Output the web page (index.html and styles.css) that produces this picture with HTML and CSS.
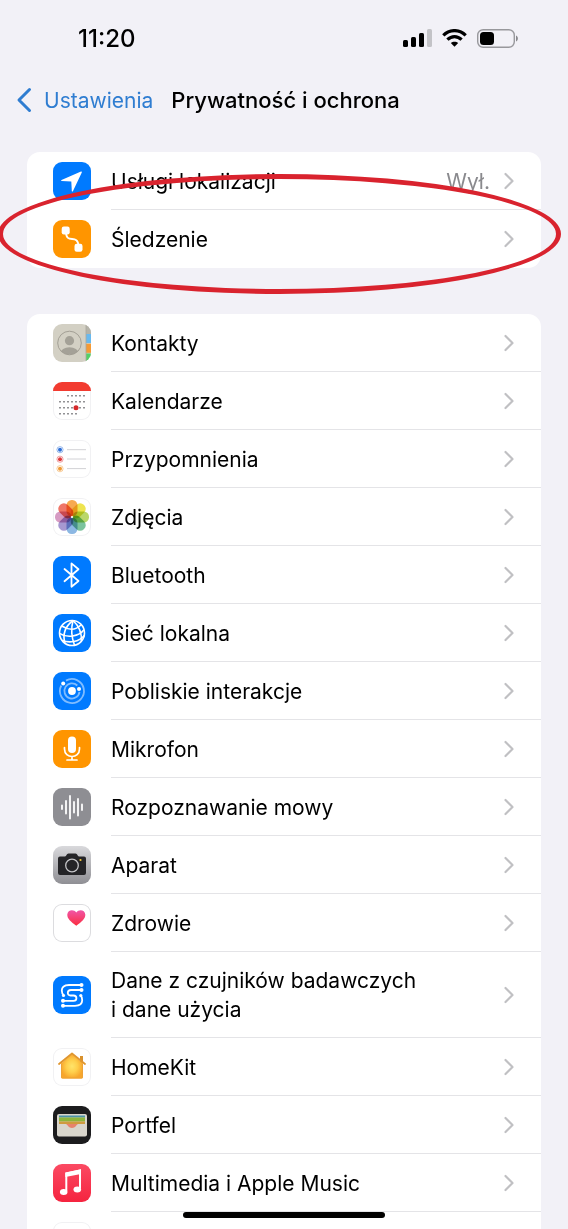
FILE: index.html
```
<!DOCTYPE html>
<html lang="pl">
  <head>
    <meta charset="utf-8">
    <meta name="viewport" content="width=device-width,initial-scale=1.0"/>
    <title>Prywatność i ochrona</title>
    <link rel="stylesheet" href="styles.css">
  </head>

  <body>
    <!-- shared shapes -->
    <svg class="defs" aria-hidden="true">
      <symbol id="chevron" viewBox="0 0 10 18">
        <path d="M1.5 2 L8.5 9 L1.5 16" fill="none" stroke="currentColor" stroke-width="2.2" stroke-linecap="round" stroke-linejoin="round"/>
      </symbol>
      <linearGradient id="camera-bg" x1="0" y1="0" x2="0" y2="1">
        <stop offset="0" stop-color="#d9d9dc"/><stop offset="1" stop-color="#8f8f94"/>
      </linearGradient>
      <linearGradient id="heart-bg" x1="0" y1="0" x2="0" y2="1">
        <stop offset="0" stop-color="#f056a8"/><stop offset="1" stop-color="#fb2d3f"/>
      </linearGradient>
      <linearGradient id="music-bg" x1="0" y1="0" x2="0" y2="1">
        <stop offset="0" stop-color="#fb4a63"/><stop offset="1" stop-color="#f5243f"/>
      </linearGradient>
      <radialGradient id="home-bg">
        <stop offset="0" stop-color="#ffe46a"/><stop offset="0.5" stop-color="#ffcf4c"/><stop offset="1" stop-color="#f7a62c"/>
      </radialGradient>
    </svg>

    <header class="top">
      <div class="status">
        <span class="time">11:20</span>
        <div class="status-icons">
          <svg width="29" height="18" viewBox="0 0 29 18" aria-hidden="true">
            <rect x="0" y="11" width="5" height="7" rx="1.5"/>
            <rect x="8" y="8" width="5" height="10" rx="1.5"/>
            <rect x="16" y="4" width="5" height="14" rx="1.5"/>
            <rect x="24" y="0" width="5" height="18" rx="1.5" fill="#c3c3c7"/>
          </svg>
          <svg width="25" height="18" viewBox="0 0 25 18" aria-hidden="true">
            <g fill="none" stroke="#000" stroke-width="3.2">
              <path d="M1.3 6.3 C7.6 0 17.4 0 23.7 6.3"/>
              <path d="M5.4 10.7 C9.6 6.6 15.4 6.6 19.6 10.7"/>
            </g>
            <path d="M8.8 14.1 C10.9 12.2 14.1 12.2 16.2 14.1 L12.5 17.8 Z"/>
          </svg>
          <svg width="42" height="19" viewBox="0 0 42 19" aria-hidden="true">
            <rect x="0.7" y="0.7" width="36.6" height="17.6" rx="5.5" fill="none" stroke="#98989c" stroke-width="1.4"/>
            <rect x="3" y="3" width="14" height="13" rx="3.5"/>
            <path d="M39 6.5 C41.5 7.5 41.5 11.5 39 12.5 Z" fill="#88888c"/>
          </svg>
        </div>
      </div>
      <nav class="nav">
        <a class="back" href="#">
          <svg width="16" height="26" viewBox="0 0 16 26" aria-hidden="true">
            <path d="M13.5 2.5 L3 13 L13.5 23.5" fill="none" stroke="currentColor" stroke-width="3" stroke-linecap="round" stroke-linejoin="round"/>
          </svg>
          Ustawienia
        </a>
        <h1 class="title">Prywatność i ochrona</h1>
      </nav>
    </header>

    <main class="list">
      <div class="group marked">
        <a class="row" href="#">
          <svg class="icon blue" viewBox="0 0 38 38" aria-hidden="true">
            <path d="M28 9.5 L8.5 18 C8 18.4 8.1 19 8.8 19.1 L18.3 19.6 L18.8 29 C18.9 29.7 19.6 29.8 19.9 29.2 L28.8 10.4 C29 9.7 28.7 9.3 28 9.5 Z" fill="#fff"/>
          </svg>
          <span class="cell"><span class="label">Usługi lokalizacji</span><span class="value">Wył.</span><svg class="chevron" aria-hidden="true"><use href="#chevron"/></svg></span>
        </a>
        <a class="row" href="#">
          <svg class="icon orange" viewBox="0 0 38 38" aria-hidden="true">
            <path d="M13 12 C13 25 25 13 25.5 26" fill="none" stroke="#fff" stroke-width="1.8"/>
            <rect x="8.7" y="6.5" width="8" height="8" rx="2.2" fill="#fff"/>
            <rect x="21.5" y="23.7" width="8" height="8" rx="2.2" fill="#fff"/>
          </svg>
          <span class="cell"><span class="label">Śledzenie</span><svg class="chevron" aria-hidden="true"><use href="#chevron"/></svg></span>
        </a>
        <span class="mark"></span>
      </div>

      <div class="group">
        <!-- Contacts -->
        <a class="row" href="#">
          <svg class="icon contacts" viewBox="0 0 38 38" aria-hidden="true">
            <rect x="33" width="5" height="10" fill="#b5b3a9"/>
            <rect x="33" y="10" width="5" height="9" fill="#69b9ee"/>
            <rect x="33" y="19.8" width="5" height="9" fill="#f59a35"/>
            <rect x="33" y="29.5" width="5" height="9" fill="#54d067"/>
            <path d="M33 0 V38" stroke="#aaa79c" stroke-width="0.8"/>
            <clipPath id="face"><circle cx="16.5" cy="19" r="11.6"/></clipPath>
            <g clip-path="url(#face)" fill="#a4a197"><circle cx="16.5" cy="16.7" r="4.6"/><ellipse cx="16.5" cy="29" rx="9" ry="5.8"/></g>
            <circle cx="16.5" cy="19" r="11.8" fill="none" stroke="#9d9a90" stroke-width="0.9"/>
          </svg>
          <span class="cell"><span class="label">Kontakty</span><svg class="chevron" aria-hidden="true"><use href="#chevron"/></svg></span>
        </a>
        <!-- Calendar -->
        <a class="row" href="#">
          <svg class="icon white" viewBox="0 0 38 38" aria-hidden="true">
            <rect width="38" height="9" fill="#f23b30"/>
            <g stroke="#77777a" stroke-width="1.6" stroke-dasharray="1.6 2.4">
              <path d="M14.2 13.8 H32"/><path d="M6.2 19.8 H32"/><path d="M6.2 25.8 H32"/><path d="M6.2 31.8 H24"/>
            </g>
            <circle cx="23" cy="25.8" r="2.5" fill="#d5292b"/>
          </svg>
          <span class="cell"><span class="label">Kalendarze</span><svg class="chevron" aria-hidden="true"><use href="#chevron"/></svg></span>
        </a>
        <!-- Reminders -->
        <a class="row" href="#">
          <svg class="icon white" viewBox="0 0 38 38" aria-hidden="true">
            <path d="M14 9.7 H33 M14 19 H33 M14 28.6 H33" stroke="#d2d2d6" stroke-width="1"/>
            <g stroke-width="0.8" stroke-opacity="0.6">
              <circle cx="7" cy="9.7" r="2" fill="#2e6fd8"/><circle cx="7" cy="9.7" r="3.1" fill="none" stroke="#2e6fd8"/>
              <circle cx="7" cy="19.2" r="2" fill="#e0383a"/><circle cx="7" cy="19.2" r="3.1" fill="none" stroke="#e0383a"/>
              <circle cx="7" cy="28.7" r="2" fill="#f09a34"/><circle cx="7" cy="28.7" r="3.1" fill="none" stroke="#f09a34"/>
            </g>
          </svg>
          <span class="cell"><span class="label">Przypomnienia</span><svg class="chevron" aria-hidden="true"><use href="#chevron"/></svg></span>
        </a>
        <!-- Photos -->
        <a class="row" href="#">
          <svg class="icon white petals" viewBox="0 0 38 38" aria-hidden="true">
            <rect x="13.5" y="2" width="11" height="16.5" rx="5.2" fill="#f7a13b"/>
            <rect x="13.5" y="2" width="11" height="16.5" rx="5.2" fill="#ece13c" transform="rotate(45 19 19)"/>
            <rect x="13.5" y="2" width="11" height="16.5" rx="5.2" fill="#b3d35a" transform="rotate(90 19 19)"/>
            <rect x="13.5" y="2" width="11" height="16.5" rx="5.2" fill="#6dbd92" transform="rotate(135 19 19)"/>
            <rect x="13.5" y="2" width="11" height="16.5" rx="5.2" fill="#7fb0e0" transform="rotate(180 19 19)"/>
            <rect x="13.5" y="2" width="11" height="16.5" rx="5.2" fill="#9c8dcc" transform="rotate(225 19 19)"/>
            <rect x="13.5" y="2" width="11" height="16.5" rx="5.2" fill="#d290bd" transform="rotate(270 19 19)"/>
            <rect x="13.5" y="2" width="11" height="16.5" rx="5.2" fill="#ee6757" transform="rotate(315 19 19)"/>
            <circle cx="19" cy="19" r="1" fill="#fff"/>
          </svg>
          <span class="cell"><span class="label">Zdjęcia</span><svg class="chevron" aria-hidden="true"><use href="#chevron"/></svg></span>
        </a>
        <!-- Bluetooth -->
        <a class="row" href="#">
          <svg class="icon blue" viewBox="0 0 38 38" aria-hidden="true">
            <path d="M11.5 13 L25.5 25 L18.5 30.8 V7.4 L25.5 13.2 L11.5 25.2" fill="none" stroke="#fff" stroke-width="1.8" stroke-linejoin="round" stroke-linecap="round"/>
          </svg>
          <span class="cell"><span class="label">Bluetooth</span><svg class="chevron" aria-hidden="true"><use href="#chevron"/></svg></span>
        </a>
        <!-- Local network -->
        <a class="row" href="#">
          <svg class="icon blue" viewBox="0 0 38 38" aria-hidden="true">
            <g fill="none" stroke="#fff" stroke-width="1.6">
              <circle cx="19" cy="19" r="12.5"/>
              <path d="M20 6.5 C11.5 13 9.5 21 12 29.5"/>
              <path d="M20 6.5 C18 14 18.5 23 21.5 31.3"/>
              <path d="M20 6.5 C26 12 29 20 28.3 27.4"/>
              <path d="M8.8 12 C16 16.5 23 16 28.2 10.8"/>
              <path d="M6.5 19.3 C14 24.5 26 22.5 31 15.8"/>
              <path d="M9 26.2 C16 29.5 26 28 31.3 21.5"/>
            </g>
          </svg>
          <span class="cell"><span class="label">Sieć lokalna</span><svg class="chevron" aria-hidden="true"><use href="#chevron"/></svg></span>
        </a>
        <!-- Nearby interactions -->
        <a class="row" href="#">
          <svg class="icon blue" viewBox="0 0 38 38" aria-hidden="true">
            <g fill="none" stroke="#7fbcff" stroke-width="1.8">
              <path d="M13 8.6 A12 12 0 1 1 8.3 13.5"/>
              <path d="M24.3 13.5 A7.6 7.6 0 1 0 26.5 19.8"/>
            </g>
            <g fill="#fff"><circle cx="19" cy="19" r="3.9"/><circle cx="10.2" cy="11.4" r="2"/><circle cx="26" cy="17" r="2"/></g>
          </svg>
          <span class="cell"><span class="label">Pobliskie interakcje</span><svg class="chevron" aria-hidden="true"><use href="#chevron"/></svg></span>
        </a>
        <!-- Microphone -->
        <a class="row" href="#">
          <svg class="icon orange" viewBox="0 0 38 38" aria-hidden="true">
            <rect x="15" y="6.5" width="8" height="16.5" rx="4" fill="#fff"/>
            <path d="M11.5 17.5 V19 C11.5 29 26.5 29 26.5 19 V17.5 M19 26.5 V30 M14 30 H24" fill="none" stroke="#fff" stroke-width="1.7" stroke-linecap="round"/>
          </svg>
          <span class="cell"><span class="label">Mikrofon</span><svg class="chevron" aria-hidden="true"><use href="#chevron"/></svg></span>
        </a>
        <!-- Speech -->
        <a class="row" href="#">
          <svg class="icon gray" viewBox="0 0 38 38" aria-hidden="true">
            <path d="M9 17.5 V21 M13 13 V25.5 M17 8 V30.5 M21 14 V24.5 M25 11 V27.5 M29 16.5 V22" stroke="#fff" stroke-width="1.8" stroke-linecap="round"/>
          </svg>
          <span class="cell"><span class="label">Rozpoznawanie mowy</span><svg class="chevron" aria-hidden="true"><use href="#chevron"/></svg></span>
        </a>
        <!-- Camera -->
        <a class="row" href="#">
          <svg class="icon" viewBox="0 0 38 38" aria-hidden="true">
            <rect width="38" height="38" fill="url(#camera-bg)"/>
            <path d="M7 10.5 H12 C13.5 10.5 13.5 7.5 15.5 7.5 H22.5 C24.5 7.5 24.5 10.5 26 10.5 H31 Q33 10.5 33 12.5 V27 Q33 29 31 29 H7 Q5 29 5 27 V12.5 Q5 10.5 7 10.5 Z" fill="#242427"/>
            <circle cx="19" cy="19.5" r="6.3" fill="none" stroke="#c4c4c7" stroke-width="1.3"/>
            <circle cx="27.5" cy="14" r="1.1" fill="#f5c93b"/>
          </svg>
          <span class="cell"><span class="label">Aparat</span><svg class="chevron" aria-hidden="true"><use href="#chevron"/></svg></span>
        </a>
        <!-- Health -->
        <a class="row" href="#">
          <svg class="icon white outlined" viewBox="0 0 38 38" aria-hidden="true">
            <path d="M23.3 21.7 C18 18 14 14.5 14.3 10.5 C14.6 5.5 21 4.8 23.3 8.6 C25.6 4.8 32 5.5 32.3 10.5 C32.6 14.5 28.6 18 23.3 21.7 Z" fill="url(#heart-bg)"/>
          </svg>
          <span class="cell"><span class="label">Zdrowie</span><svg class="chevron" aria-hidden="true"><use href="#chevron"/></svg></span>
        </a>
        <!-- Research sensors -->
        <a class="row" href="#">
          <svg class="icon blue" viewBox="0 0 38 38" aria-hidden="true">
            <g fill="none" stroke="#fff" stroke-width="1.8">
              <path d="M28.5 9 H16 C10.5 9 8.8 11.5 8.8 14.5 C8.8 17.5 9.5 18.5 11 19.5"/>
              <path d="M28.5 14 H18 C13.8 14 13.8 19.5 17.5 19.5 H20.5 C24.4 19.5 24.4 24.8 20.5 24.8 H10"/>
              <path d="M10 29.8 H22 C27.5 29.8 29.2 27.3 29.2 24.3 C29.2 21.5 28.8 20.5 27.5 19.5"/>
            </g>
            <g fill="#fff">
              <circle cx="28.5" cy="9" r="2"/><circle cx="28.5" cy="14" r="2"/><circle cx="27.8" cy="19.5" r="1.6"/>
              <circle cx="10.5" cy="19.5" r="1.6"/><circle cx="10" cy="24.8" r="2"/><circle cx="10" cy="29.8" r="2"/>
            </g>
          </svg>
          <span class="cell"><span class="label">Dane z czujników badawczych i&nbsp;dane użycia</span><svg class="chevron" aria-hidden="true"><use href="#chevron"/></svg></span>
        </a>
        <!-- HomeKit -->
        <a class="row" href="#">
          <svg class="icon white" viewBox="0 0 38 38" aria-hidden="true">
            <path d="M27 8 H30 V15 H27 Z" fill="#d8912d"/>
            <path d="M19 6 L30 15.5 V29 Q30 30.5 28.5 30.5 H9.5 Q8 30.5 8 29 V15.5 Z" fill="url(#home-bg)"/>
            <path d="M6 16 L19 5.5 L32 16" fill="none" stroke="#e0962f" stroke-width="1.8" stroke-linecap="round" stroke-linejoin="round"/>
            <path d="M8.5 16 V29 Q8.5 30 9.5 30 H28.5 Q29.5 30 29.5 29 V16" fill="none" stroke="#eda236"/>
          </svg>
          <span class="cell"><span class="label">HomeKit</span><svg class="chevron" aria-hidden="true"><use href="#chevron"/></svg></span>
        </a>
        <!-- Wallet -->
        <a class="row" href="#">
          <svg class="icon black" viewBox="0 0 38 38" aria-hidden="true">
            <rect x="4" y="8" width="30" height="22.5" rx="2" fill="#d9d6cd"/>
            <rect x="6" y="9.5" width="26" height="2" fill="#4c93a8"/>
            <rect x="6" y="11.5" width="26" height="4" fill="#8db53c"/>
            <rect x="6" y="15.5" width="26" height="2.5" fill="#cf9b3f"/>
            <path d="M13 18 H25 C23 19 22.5 22 19 22 C15.5 22 15 19 13 18 Z" fill="#e8836d"/>
          </svg>
          <span class="cell"><span class="label">Portfel</span><svg class="chevron" aria-hidden="true"><use href="#chevron"/></svg></span>
        </a>
        <!-- Music -->
        <a class="row" href="#">
          <svg class="icon" viewBox="0 0 38 38" aria-hidden="true">
            <rect width="38" height="38" fill="url(#music-bg)"/>
            <path d="M13.3 27 V9.5 L27 6.5 V24.5" fill="none" stroke="#fff" stroke-width="2"/>
            <path d="M12.3 8.5 L28 5.3 V10 L12.3 13 Z" fill="#fff"/>
            <ellipse cx="10.7" cy="28" rx="3.8" ry="3" fill="#fff"/>
            <ellipse cx="24.3" cy="25.5" rx="3.8" ry="3" fill="#fff"/>
          </svg>
          <span class="cell"><span class="label">Multimedia i Apple Music</span><svg class="chevron" aria-hidden="true"><use href="#chevron"/></svg></span>
        </a>
        <div class="row">
          <svg class="icon white" viewBox="0 0 38 38" aria-hidden="true"></svg>
        </div>
      </div>
    </main>

    <div class="home-bar"></div>
  </body>
</html>
```
FILE: styles.css
```
* {
  box-sizing: border-box;
  margin: 0;
  padding: 0;
}
body {
  display: flex;
  flex-direction: column;
  height: 100vh;
  overflow: hidden;
  background-color: #f2f1f7;
  color: #000;
  font-family: Inter, 'Liberation Sans', sans-serif;
  font-size: 21px;
  line-height: 29px;
}
a {
  color: inherit;
  text-decoration: none;
}
.defs {
  position: absolute;
  width: 0;
  height: 0;
}

/* header */
.top {
  flex: none;
}
.status {
  display: flex;
  justify-content: space-between;
  align-items: center;
  height: 76px;
  padding: 0 49px 0 78px;
}
.time {
  font-size: 24px;
  font-weight: 500;
}
.status-icons {
  display: flex;
  align-items: center;
  gap: 10px;
}
.nav {
  display: flex;
  align-items: center;
  gap: 18px;
  height: 48px;
  padding: 0 16px;
}
.back {
  display: flex;
  align-items: center;
  gap: 12px;
  color: #2f7dd1;
}
.title {
  font-size: 22px;
  font-weight: 500;
  white-space: nowrap;
}

/* list */
.list {
  display: flex;
  flex: 1;
  flex-direction: column;
  gap: 46px;
  min-height: 0;
  padding: 28px 27px 0;
  overflow-y: auto;
  overflow-x: hidden;
  scrollbar-width: none;
}
.group {
  flex: none;
  border-radius: 13px;
  background-color: #fff;
}
.row {
  display: flex;
  align-items: center;
  gap: 20px;
  min-height: 58px;
  padding-left: 26px;
}
.icon {
  flex: none;
  width: 38px;
  height: 38px;
  border-radius: 9px;
}
.blue {
  background-color: #007aff;
}
.orange {
  background-color: #ff9500;
}
.gray {
  background-color: #8e8e93;
}
.black {
  background-color: #1c1c1e;
}
.contacts {
  background-color: #d3d0c4;
}
.white {
  background-color: #fff;
  box-shadow: inset 0 0 0 1px #f1f1f3;
}
.outlined {
  box-shadow: inset 0 0 0 1px #dcdcdf;
}
.petals rect {
  mix-blend-mode: multiply;
  opacity: 0.9;
}
.cell {
  display: flex;
  flex: 1;
  align-items: center;
  gap: 14px;
  align-self: stretch;
  min-height: 58px;
  padding: 14px 27px 13px 0;
  border-bottom: 1px solid #e4e4e7;
}
.marked .row:nth-child(2) .cell {
  border-bottom-color: transparent;
}
.label {
  flex: 1;
  max-width: 320px;
  margin-right: auto;
}
.value {
  color: #8a8a8e;
}
.chevron {
  flex: none;
  width: 10px;
  height: 18px;
  color: #c0c0c3;
}

/* red ring around the first group */
.marked {
  position: relative;
}
.mark {
  position: absolute;
  top: 22px;
  right: -20px;
  bottom: -26px;
  left: -29px;
  border: 5px solid #d9232e;
  border-radius: 50%;
  pointer-events: none;
}

.home-bar {
  position: fixed;
  bottom: 11px;
  left: 50%;
  width: 202px;
  height: 6px;
  border-radius: 3px;
  background-color: #000;
  transform: translateX(-50%);
}
```
